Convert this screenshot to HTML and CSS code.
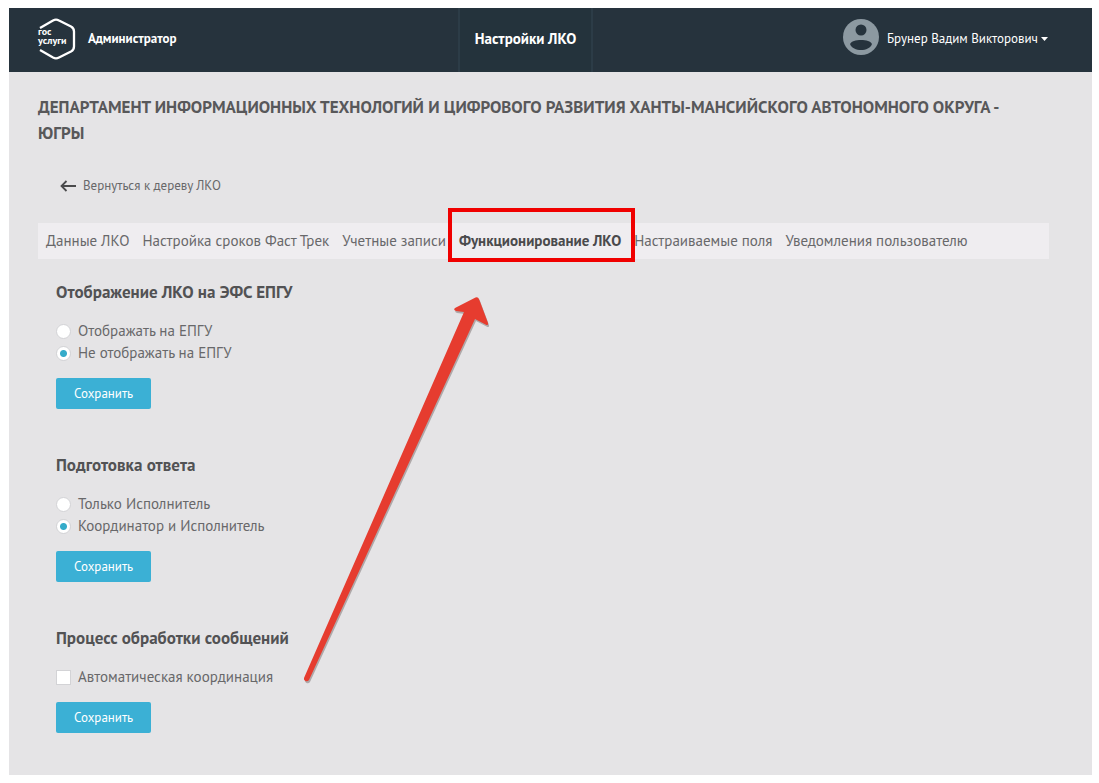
FILE: index.html
```html
<!DOCTYPE html>
<html lang="ru">
<head>
<meta charset="utf-8">
<meta name="viewport" content="width=device-width, initial-scale=1">
<title>Настройки ЛКО</title>
<link rel="stylesheet" href="styles.css">
</head>
<body>
<div class="app">
  <header class="topbar">
    <div class="brand">
      <svg class="logo" viewBox="0 0 40 42" role="img" aria-label="госуслуги">
        <path d="M3 10 16 2.500q3-1.600 6 0L34 8.500q3 1.600 3 5v15q0 3.400-3 5L22 39.500q-3 1.600-6 0L3 32" fill="none" stroke="#fff" stroke-width="2.300"/>
        <text x="1" y="17" class="logo-text">гос</text>
        <text x="1" y="26" class="logo-text">услуги</text>
      </svg>
      <span class="role">Администратор</span>
    </div>
    <a class="section-link" href="#settings">Настройки ЛКО</a>
    <div class="account">
      <button class="user" type="button">
        <svg class="avatar" viewBox="0 0 36 36" aria-hidden="true">
          <circle cx="18" cy="18" r="18" fill="#8c99a1"/>
          <circle cx="18" cy="11" r="5.500" fill="#26333d"/>
          <path d="M7 25C9 19.500 27 19.500 29 25 26 33 10 33 7 25Z" fill="#26333d"/>
        </svg>
        <span>Брунер Вадим Викторович</span>
        <svg class="caret" viewBox="0 0 7 4" aria-hidden="true"><path d="M0 0h7L3.500 4z" fill="#fff"/></svg>
      </button>
    </div>
  </header>
  <main class="content" id="settings">
    <h1 class="title">ДЕПАРТАМЕНТ ИНФОРМАЦИОННЫХ ТЕХНОЛОГИЙ И ЦИФРОВОГО РАЗВИТИЯ ХАНТЫ-МАНСИЙСКОГО АВТОНОМНОГО ОКРУГА - ЮГРЫ</h1>
    <a class="back" href="#tree">
      <svg class="back-icon" viewBox="0 0 16 12" aria-hidden="true"><path d="M16 6H1.500M6.500 1l-5 5 5 5" fill="none" stroke="#4a4a4c" stroke-width="1.800"/></svg>
      Вернуться к дереву ЛКО
    </a>
    <nav class="tabs">
      <a class="tab" href="#data">Данные ЛКО</a>
      <a class="tab" href="#fast">Настройка сроков Фаст Трек</a>
      <a class="tab" href="#accounts">Учетные записи</a>
      <a class="tab tab-active" href="#work" aria-current="page">Функционирование ЛКО
        <svg class="pointer" viewBox="0 0 190 398" aria-hidden="true">
          <path class="pointer-shadow" transform="translate(1 2)" d="M171.500 8.500q2.500-1 3.500 1.500l9 24q.5 3-2.500 1.500L171 30 5 391q-1.500 2-3.500 1T0 389L160 23l-8-1q-3-1-1-3z"/>
          <path class="pointer-shape" d="M171.500 8.500q2.500-1 3.500 1.500l9 24q.5 3-2.500 1.500L171 30 5 391q-1.500 2-3.500 1T0 389L160 23l-8-1q-3-1-1-3z"/>
        </svg>
      </a>
      <a class="tab" href="#fields">Настраиваемые поля</a>
      <a class="tab" href="#notify">Уведомления пользователю</a>
    </nav>
    <form class="group">
      <h2 class="group-title">Отображение ЛКО на ЭФС ЕПГУ</h2>
      <label class="option"><input class="radio" type="radio" name="display">Отображать на ЕПГУ</label>
      <label class="option"><input class="radio" type="radio" name="display" checked>Не отображать на ЕПГУ</label>
      <button class="save" type="button">Сохранить</button>
    </form>
    <form class="group">
      <h2 class="group-title">Подготовка ответа</h2>
      <label class="option"><input class="radio" type="radio" name="answer">Только Исполнитель</label>
      <label class="option"><input class="radio" type="radio" name="answer" checked>Координатор и Исполнитель</label>
      <button class="save" type="button">Сохранить</button>
    </form>
    <form class="group">
      <h2 class="group-title">Процесс обработки сообщений</h2>
      <label class="option"><input class="checkbox" type="checkbox">Автоматическая координация</label>
      <button class="save" type="button">Сохранить</button>
    </form>
  </main>
</div>
</body>
</html>
```

FILE: styles.css
```css
* { box-sizing: border-box; }

body {
  margin: 8px 7px 8px 9px;
  background: #fff;
  color: #68686a;
  font: 15px/22px "PT Sans", "Noto Sans", "Open Sans", sans-serif;
}

a { color: inherit; text-decoration: none; }

.app { background: #e5e4e6; }

.topbar {
  display: grid;
  grid-template-columns: 9fr auto 10fr;
  height: 64px;
  background: #26333d;
  color: #fff;
}

.brand {
  display: flex;
  align-items: center;
  gap: 11px;
  padding: 0 0 3px 28px;
}

.logo { width: 40px; height: 42px; }

.logo-text {
  fill: #fff;
  font-family: "PT Sans", "Noto Sans", sans-serif;
  font-size: 10px;
  font-weight: 700;
}

.role { font-size: 13px; font-weight: 700; }

.section-link {
  display: flex;
  align-items: center;
  padding: 0 15px 3px;
  border: solid #2c3c47;
  border-width: 0 2px;
  background: #24333c;
  font-size: 15px;
  font-weight: 700;
}

.account {
  display: flex;
  justify-content: flex-end;
  padding: 0 44px 3px 0;
}

.user {
  display: flex;
  align-items: center;
  padding: 0;
  border: 0;
  background: none;
  color: #fff;
  font: inherit;
  font-size: 13px;
}

.avatar { width: 36px; height: 36px; margin: 0 8px 4px 0; }
.caret { width: 7px; height: 4px; margin-left: 3px; }

.content { padding: 22px 43px 42px 29px; }

.title {
  margin: 0;
  padding-right: 40px;
  color: #58585a;
  font-size: 17px;
  font-weight: 600;
  line-height: 26px;
}

.back {
  display: inline-flex;
  align-items: center;
  gap: 7px;
  margin: 29px 0 0 22px;
  font-size: 13px;
}

.back-icon { width: 16px; height: 12px; }

.tabs {
  display: flex;
  gap: 13px;
  margin-top: 25px;
  padding: 0 8px;
  background: #efedf0;
  line-height: 36px;
  white-space: nowrap;
}

.tab-active {
  position: relative;
  color: #4a4a4c;
  font-weight: 700;
}

.tab-active::after {
  content: "";
  position: absolute;
  inset: -15px -14px -3px -11px;
  border: 4px solid #f00000;
}

.pointer {
  position: absolute;
  top: 66px;
  left: -155px;
  width: 190px;
  height: 398px;
  pointer-events: none;
}

.pointer-shape { fill: #e63c2f; }
.pointer-shadow { fill: #8a8080; opacity: 0.6; }

.group {
  display: flex;
  flex-direction: column;
  align-items: flex-start;
  margin: 20px 0 0 18px;
}

.group + .group { margin-top: 43px; }

.group-title {
  margin: 0 0 15px;
  color: #525254;
  font-size: 17px;
  font-weight: 600;
  line-height: 26px;
}

.option {
  display: flex;
  align-items: center;
  gap: 7px;
}

.radio,
.checkbox {
  appearance: none;
  width: 15px;
  height: 15px;
  margin: 0;
  border: 1px solid #d3d3d6;
  background: #fff;
}

.radio { border-radius: 50%; }

.radio:checked {
  background: radial-gradient(circle, #35abc9 0 3px, #fff 4px);
}

.save {
  height: 31px;
  margin-top: 14px;
  padding: 0 18px;
  border: 0;
  border-radius: 2px;
  background: #3bb0d5;
  color: #fff;
  font: inherit;
  font-size: 13px;
}
```
